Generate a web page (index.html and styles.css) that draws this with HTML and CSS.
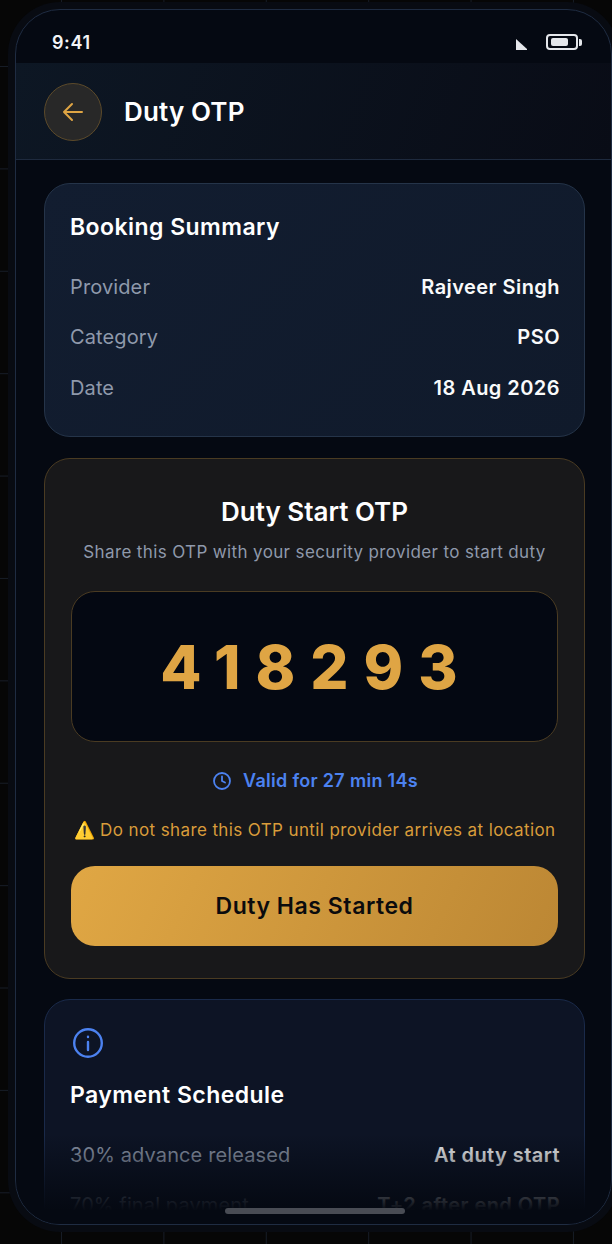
FILE: index.html
```html
<!DOCTYPE html>
<html>
<head>
    <title>Duty OTP</title>
    <link rel="stylesheet" href="styles.css">
</head>
<body>
    <div class="phone">
        <div class="status-bar">
            <span class="status-time">9:41</span>
            <div class="status-icons">
                <svg class="wifi-icon" width="11" height="11" viewBox="0 0 11 11">
                    <path d="M0 0 L11 10 V11 H0 Z" fill="#e5e7eb"/>
                </svg>
                <div class="battery">
                    <div class="battery-fill"></div>
                </div>
                <div class="battery-cap"></div>
            </div>
        </div>
        <div class="header">
            <button class="back-button">
                <svg width="22" height="22" viewBox="0 0 22 22" fill="none" stroke="#dfa544" stroke-width="2" stroke-linecap="round" stroke-linejoin="round">
                    <path d="M20 11 H2 M10 3 L2 11 L10 19"/>
                </svg>
            </button>
            <h1 class="header-title">Duty OTP</h1>
        </div>
        <div class="content">
            <div class="card summary-card">
                <h2 class="card-title">Booking Summary</h2>
                <div class="row"><span class="row-label">Provider</span><span class="row-value">Rajveer Singh</span></div>
                <div class="row"><span class="row-label">Category</span><span class="row-value">PSO</span></div>
                <div class="row"><span class="row-label">Date</span><span class="row-value">18 Aug 2026</span></div>
            </div>
            <div class="card otp-card">
                <h2 class="otp-title">Duty Start OTP</h2>
                <p class="otp-hint">Share this OTP with your security provider to start duty</p>
                <div class="otp-box">418293</div>
                <div class="otp-timer">
                    <svg width="20" height="20" viewBox="0 0 20 20" fill="none" stroke="#4c82f0" stroke-width="1.8" stroke-linecap="round" stroke-linejoin="round">
                        <circle cx="10" cy="10" r="8"/>
                        <path d="M10 5.5 V10 L13 11.5"/>
                    </svg>
                    <span>Valid for 27 min 14s</span>
                </div>
                <p class="otp-warning">⚠️ Do not share this OTP until provider arrives at location</p>
                <button class="start-button">Duty Has Started</button>
            </div>
            <div class="card payment-card">
                <svg class="info-icon" width="30" height="30" viewBox="0 0 30 30" fill="none" stroke="#4c82f0" stroke-width="2.4" stroke-linecap="round">
                    <circle cx="15" cy="15" r="13.8"/>
                    <path d="M15 14 V22 M15 8.8 V9"/>
                </svg>
                <h2 class="card-title">Payment Schedule</h2>
                <div class="row"><span class="row-label">30% advance released</span><span class="row-value">At duty start</span></div>
                <div class="row"><span class="row-label">70% final payment</span><span class="row-value">T+2 after end OTP</span></div>
            </div>
        </div>
        <div class="bottom-fade"></div>
        <div class="home-indicator"></div>
    </div>
</body>
</html>
```

FILE: styles.css
```css
html, body {
    margin: 0;
    padding: 0;
    height: 1244px;
    overflow: hidden;
}

body {
    padding: 9px 0 0 15px;
    box-sizing: border-box;
    background-color: #060606;
    background-image:
        linear-gradient(to right, #161c26 1px, transparent 1px),
        linear-gradient(to bottom, #161c26 1px, transparent 1px);
    background-size: 102.4px 102.4px;
    background-position: 61px 66px;
    font-family: "Inter", "Liberation Sans", sans-serif;
    color: #fff;
}

.phone {
    position: relative;
    width: 597px;
    height: 1216px;
    box-sizing: border-box;
    border: 1px solid #1f2c42;
    border-radius: 45px;
    background-color: #050912;
    box-shadow: 0 0 0 7px #080b12;
    overflow: hidden;
    display: flex;
    flex-direction: column;
}

.status-bar {
    height: 53px;
    flex-shrink: 0;
    display: flex;
    justify-content: space-between;
    align-items: flex-start;
    padding: 22px 29px 0 36px;
    box-sizing: border-box;
}

.status-time {
    margin-top: 1px;
    font-size: 18px;
    font-weight: 600;
    line-height: 20px;
    letter-spacing: 0.6px;
    color: #f3f4f6;
}

.status-icons {
    display: flex;
    align-items: center;
    margin-top: 2px;
}

.wifi-icon {
    margin-top: 4px;
    margin-right: 19px;
}

.battery {
    width: 32px;
    height: 16px;
    box-sizing: border-box;
    border: 2px solid #e5e7eb;
    border-radius: 4px;
    padding: 2px 3px;
}

.battery-fill {
    width: 17px;
    height: 8px;
    border-radius: 2px;
    background-color: #e5e7eb;
}

.battery-cap {
    width: 3px;
    height: 7px;
    margin-left: 1px;
    border-radius: 0 2px 2px 0;
    background-color: #e5e7eb;
}

.header {
    height: 97px;
    flex-shrink: 0;
    box-sizing: border-box;
    display: flex;
    align-items: center;
    gap: 22px;
    padding: 1px 0 0 28px;
    border-bottom: 1px solid #1e2a3e;
    background: linear-gradient(110deg, #0d1724, #090c16);
}

.back-button {
    width: 58px;
    height: 58px;
    padding: 0;
    display: flex;
    align-items: center;
    justify-content: center;
    border: 1px solid #5c4a2a;
    border-radius: 50%;
    background-color: #282828;
}

.header-title {
    margin: 1px 0 0;
    font-size: 26px;
    font-weight: 600;
    line-height: 32px;
    letter-spacing: 0.15px;
}

.content {
    padding: 23px 26px 0 28px;
    display: flex;
    flex-direction: column;
    gap: 21px;
}

.card {
    box-sizing: border-box;
    border-radius: 26px;
    padding: 26px;
    flex-shrink: 0;
}

.summary-card {
    height: 254px;
    padding: 26px 24px 26px 25px;
    border: 1px solid #253449;
    background: linear-gradient(135deg, #121d30, #101a2b);
}

.card-title {
    margin: 0 0 18px;
    font-size: 23px;
    font-weight: 600;
    line-height: 34px;
    letter-spacing: 0.45px;
}

.row {
    display: flex;
    justify-content: space-between;
    align-items: center;
    height: 50.3px;
    font-size: 20px;
}

.row-label {
    color: #8f99ab;
    letter-spacing: 0.12px;
}

.row-value {
    font-weight: 600;
    color: #f9fafb;
    letter-spacing: 0.45px;
}

.otp-card {
    height: 521px;
    margin-bottom: -1px;
    border: 1px solid #4a3b22;
    background-color: #18181a;
    text-align: center;
}

.otp-title {
    margin: 8px 0 0;
    font-size: 26px;
    font-weight: 600;
    line-height: 38px;
}

.otp-hint {
    margin: 6px 0 0;
    font-size: 17px;
    line-height: 30px;
    letter-spacing: 0.37px;
    color: #8f99ab;
}

.otp-box {
    height: 151px;
    margin-top: 24px;
    padding-left: 4px;
    box-sizing: border-box;
    border: 1px solid #4a3b22;
    border-radius: 24px;
    background-color: #040812;
    display: flex;
    align-items: center;
    justify-content: center;
    font-size: 60px;
    font-weight: 800;
    letter-spacing: 15px;
    color: #dfa544;
}

.otp-timer {
    margin-top: 27px;
    padding-left: 1px;
    display: flex;
    align-items: center;
    justify-content: center;
    gap: 11px;
    font-size: 18px;
    font-weight: 600;
    line-height: 24px;
    letter-spacing: 0.3px;
    color: #4c82f0;
}

.otp-warning {
    margin: 25px 0 0;
    font-size: 17px;
    line-height: 24px;
    letter-spacing: 0.39px;
    color: #d99c3a;
}

.start-button {
    display: block;
    width: 100%;
    height: 80px;
    margin-top: 24px;
    border: none;
    border-radius: 24px;
    background: linear-gradient(115deg, #e0a744, #bc8734);
    font-family: inherit;
    font-size: 23px;
    font-weight: 600;
    letter-spacing: 0.55px;
    color: #0b0b0d;
}

.payment-card {
    height: 300px;
    padding: 26px 24px 26px 25px;
    border: 1px solid #1a2a4a;
    background-color: #0d1425;
}

.info-icon {
    display: block;
    margin: 2px 0 20px 3px;
}

.bottom-fade {
    position: absolute;
    left: 0;
    right: 0;
    bottom: 0;
    height: 90px;
    background: linear-gradient(to bottom, rgba(5, 9, 18, 0), #050912 85%);
}

.home-indicator {
    position: absolute;
    left: 209px;
    bottom: 10px;
    width: 180px;
    height: 6px;
    border-radius: 3px;
    background-color: #494c54;
}
```
